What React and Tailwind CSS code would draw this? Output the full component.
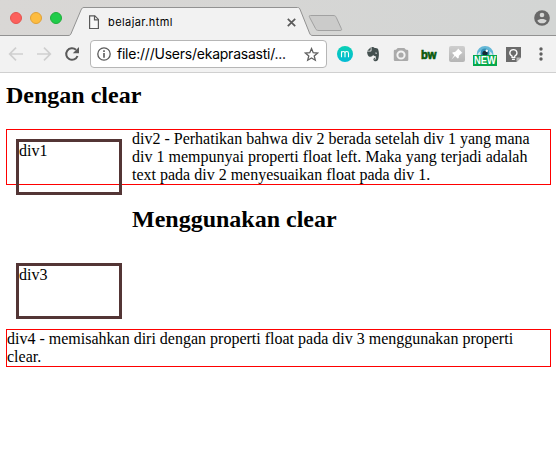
import React from "react";

function TabStrip() {
  return (
    <div className="relative flex h-9 items-center bg-gradient-to-r from-[#d9d7d5] to-[#d3d5d4]">
      <svg className="absolute inset-0" width="556" height="36" viewBox="0 0 556 36" fill="none">
        <path d="M0 35.5H68C70 35.5 70.5 35 71.3 33L81 10C82 8 82.5 7.5 84 7.5H297.500C299 7.500 299.500 8 300.300 10L309.500 33C310.300 35 311 35.500 313 35.500H556V36H0Z" fill="#f2f2f2" />
        <path d="M0 35.5H68C70 35.5 70.5 35 71.3 33L81 10C82 8 82.5 7.5 84 7.5H297.5C299 7.5 299.5 8 300.3 10L309.5 33C310.3 35 311 35.5 313 35.5H556" stroke="#929292" />
        <path d="M310.5 15.500H333C335 15.500 335.600 16 336.300 17.500L341.300 28.500C342 30 341.500 30.500 340 30.500H319C317 30.500 316.200 30 315.500 28.500L309.700 17.500C309 16 309 15.500 310.500 15.500Z" fill="#cbcbca" stroke="#a1a1a1" />
      </svg>
      <div className="relative ml-[10px] flex gap-2">
        <span className="size-3 rounded-full border border-[#e5534e] bg-[#fc605c]" />
        <span className="size-3 rounded-full border border-[#e0a137] bg-[#fdbc40]" />
        <span className="size-3 rounded-full border border-[#1fae3b] bg-[#20cc4a]" />
      </div>
      <svg className="relative top-1 ml-[26px]" width="12" height="15" viewBox="0 0 12 15" fill="none" stroke="#5a5a5a" strokeWidth="1.200">
        <path d="M1.600 .8H6.800L10.400 4.400V13.500H1.600Z" fill="#f8f8f8" />
        <path d="M6.500 .8V4.900H10.400" />
      </svg>
      <span className="relative top-1 ml-2 w-[178px] whitespace-nowrap font-[Inter,sans-serif] text-[11px] leading-4 tracking-[0.42px] text-black">
        belajar.html
      </span>
      <svg className="relative top-1 ml-[1px]" width="9" height="9" viewBox="0 0 9 9" stroke="#5a5a5a" strokeWidth="1.700">
        <path d="M.8 .8L8.200 8.200M8.200 .8L.8 8.200" />
      </svg>
      <svg className="relative ml-auto mr-[6px]" width="16" height="16" viewBox="0 0 16 16">
        <circle cx="8" cy="8" r="7.800" fill="#686868" />
        <circle cx="8" cy="5" r="2.300" fill="#d5d6d5" />
        <path d="M3.300 10.800C4.800 8.500 11.200 8.500 12.700 10.800C11.200 14.200 4.800 14.200 3.300 10.800Z" fill="#d5d6d5" />
      </svg>
    </div>
  );
}

function Extensions() {
  return (
    <svg className="ml-[9px] shrink-0" width="216" height="36" viewBox="336 36 216 36" fill="none">
      <defs>
        <linearGradient id="teal" x1="0" y1="0" x2="0" y2="1">
          <stop stopColor="#0bd0b4" />
          <stop offset="1" stopColor="#03bbd5" />
        </linearGradient>
        <linearGradient id="pin" x1="0" y1="0" x2="0" y2="1">
          <stop stopColor="#cecece" />
          <stop offset="1" stopColor="#b5b5b5" />
        </linearGradient>
      </defs>
      <circle cx="345" cy="54" r="8" fill="url(#teal)" />
      <path d="M341.500 57.300V51.300M341.500 53.400C341.500 50.900 345 50.900 345 53.400V57.300M345 53.400C345 50.900 348.500 50.900 348.500 53.400V57.300" stroke="white" strokeWidth="1.100" />

      <path d="M367.300 50.800L370.700 47.300V50.100Q370.700 50.800 370 50.800Z" fill="#44504f" />
      <path d="M371.500 47C373 46.700 374 47 374.700 47.900C376 48 377.500 48.200 378 49C379.500 52.500 379 58.500 377.700 60.300C376.300 62 373.400 61.300 373.400 59.400C373.400 57.800 375 57.500 376 57.800V56.600C374.500 56.200 373.500 55.600 373 55.100C372.500 57.200 369.500 57.100 368.600 56.200C367.500 55.200 367.100 53.300 367.100 51.600H370.300C371.200 51.600 371.500 51.200 371.500 50.300Z" fill="#44504f" />
      <path d="M375 53.300C375.300 52.200 376.800 52.500 377 53.700Z" fill="#f2f2f2" />
      <path d="M376.100 58.600C375 58.400 374.700 59 375 59.600" stroke="#f2f2f2" strokeWidth=".9" />

      <path d="M396 49.800L397.700 48H404.300L406 49.800H407Q408.300 49.800 408.300 51V59.800Q408.300 61 407 61H395Q393.800 61 393.800 59.800V51Q393.800 49.800 395 49.800Z" fill="#aaa" />
      <circle cx="401" cy="55" r="3.600" stroke="#f2f2f2" strokeWidth="2" />
      <circle cx="401" cy="55" r="1.200" fill="#aaa" />

      <text x="421" y="59" textLength="15.500" lengthAdjust="spacingAndGlyphs" className="fill-[#08580a] stroke-[#08580a] font-['Liberation_Sans',sans-serif] text-[12.5px] font-bold" strokeWidth=".7">bw</text>

      <rect x="449" y="46" width="16" height="16" rx="2" fill="url(#pin)" />
      <path d="M458.100 48.500L462.500 52.900L461.200 53.400L458.900 55.700L458.700 58L457.700 58.400L455.100 55.900L451.300 59.700L454.300 55.200L452.200 53L452.800 52.200L455 52L457.400 49.700Z" fill="white" />

      <path d="M476.800 55V54A8.300 8 0 0 1 493.400 54V55Z" fill="#65b8d7" />
      <path d="M477.500 55C478.500 48.500 491.500 48.500 492.700 55Z" fill="#d4e5eb" />
      <circle cx="485" cy="53" r="4.500" fill="#328fb5" />
      <circle cx="485" cy="53.300" r="2.600" fill="#142a33" />
      <circle cx="486.800" cy="50.800" r="1.200" fill="white" />
      <rect x="473" y="55" width="24" height="11" fill="#05a84b" />
      <text x="474" y="64" textLength="22" lengthAdjust="spacingAndGlyphs" className="fill-white font-['Liberation_Sans',sans-serif] text-[10px] font-bold">NEW</text>

      <path d="M506 47H521V57.500L516.500 62H506Z" fill="#6b6b6b" />
      <path d="M521 57.500H516.500V62Z" fill="#bcbcbc" />
      <path d="M512 57.400V56C508.500 54.500 509.500 49.600 513.400 49.600C517.300 49.600 518.300 54.500 514.800 56V57.400Z" stroke="white" strokeWidth="1.300" />
      <path d="M511.900 59.300H514.900" stroke="white" strokeWidth="1.300" />

      <g fill="#606060">
        <circle cx="541" cy="49" r="1.700" />
        <circle cx="541" cy="54" r="1.700" />
        <circle cx="541" cy="59" r="1.700" />
      </g>
    </svg>
  );
}

function Toolbar() {
  return (
    <div className="flex h-[37px] items-center border-b border-[#d0d0d0] bg-[#f2f2f2]">
      <svg className="ml-[8px] shrink-0" width="74" height="20" viewBox="8 44 74 20" fill="none">
        <g stroke="#cfcfcf" strokeWidth="1.700">
          <path d="M23 54H10M16 47.700L9.700 54L16 60.300" />
          <path d="M37 54H50M44 47.700L50.300 54L44 60.300" />
        </g>
        <path d="M77.500 56A5.800 5.800 0 1 1 76 49.800" stroke="#5a5a5a" strokeWidth="2" />
        <path d="M79 47V53.200H72.800Z" fill="#5a5a5a" />
      </svg>
      <div className="ml-2 flex h-7 w-[237px] shrink-0 items-center rounded border border-[#b6b6b6] bg-white">
        <svg className="ml-[6px] shrink-0" width="14" height="14" viewBox="0 0 14 14" fill="none" stroke="#5a5a5a">
          <circle cx="7" cy="7" r="6.200" strokeWidth="1.300" />
          <path d="M7 6V10.700M7 3.300V4.900" strokeWidth="1.600" />
        </svg>
        <span className="ml-[6px] w-[170px] whitespace-nowrap font-[Inter,sans-serif] text-[14px] leading-5 tracking-[-0.23px] text-black">
          file:///Users/ekaprasasti/...
        </span>
        <svg className="ml-auto mr-[7px] shrink-0" width="15" height="15" viewBox="0 0 15 15" fill="none" stroke="#606060" strokeWidth="1.300">
          <path d="M7.500 1.600L9.200 5.700L13.600 6L10.200 8.900L11.300 13.200L7.500 10.900L3.700 13.200L4.800 8.900L1.400 6L5.800 5.700Z" />
        </svg>
      </div>
      <Extensions />
    </div>
  );
}

function FloatBox({ children }) {
  return (
    <div className="float-left m-[10px] box-content h-[50px] w-[100px] border-[3px] border-[#533535]">
      {children}
    </div>
  );
}

export default function App() {
  return (
    <div className="h-[464px] w-[556px] overflow-hidden bg-white">
      <TabStrip />
      <Toolbar />
      <main className="flow-root pl-[6px] pr-[5px] pt-2 font-['Liberation_Serif','Times_New_Roman',serif] text-[16px] leading-[18px] text-black">
        <h2 className="mb-5 text-[24px] font-bold leading-[28px]">Dengan clear</h2>
        <FloatBox>div1</FloatBox>
        <div className="border border-[#f00]">
          div2 - Perhatikan bahwa div 2 berada setelah div 1 yang mana div 1 mempunyai properti float
          left. Maka yang terjadi adalah text pada div 2 menyesuaikan float pada div 1.
        </div>
        <h2 className="mb-5 mt-[19.9px] text-[24px] font-bold leading-[28px]">Menggunakan clear</h2>
        <FloatBox>div3</FloatBox>
        <div className="clear-left border border-[#f00]">
          div4 - memisahkan diri dengan properti float pada div 3 menggunakan properti clear.
        </div>
      </main>
    </div>
  );
}
